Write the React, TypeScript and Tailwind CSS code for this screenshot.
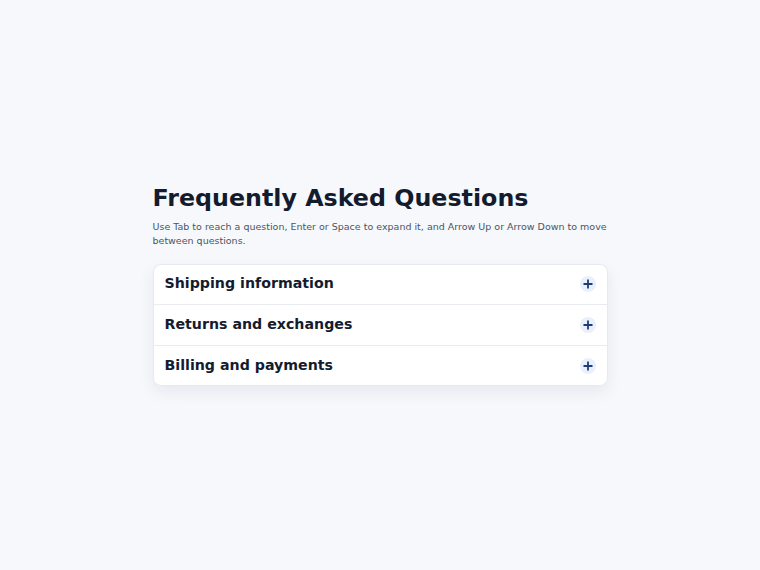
import React, { useState } from "react";

const QUESTIONS = [
  { id: "shipping", title: "Shipping information", answer: "Orders ship within 2 business days." },
  { id: "returns", title: "Returns and exchanges", answer: "Items can be returned within 30 days." },
  { id: "billing", title: "Billing and payments", answer: "We accept all major cards." },
];

const PlusIcon = ({ open }: { open: boolean }) => (
  <span className="flex h-4 w-4 items-center justify-center rounded-full bg-[#eaf0fb]">
    <svg width="10" height="10" viewBox="0 0 10 10" fill="none">
      <path d="M5 0.5v9" stroke="#1f3a7a" strokeWidth="1.8" className={open ? "hidden" : ""} />
      <path d="M0.5 5h9" stroke="#1f3a7a" strokeWidth="1.8" />
    </svg>
  </span>
);

export default function App() {
  const [openId, setOpenId] = useState<string | null>(null);

  return (
    <div
      className="flex min-h-[570px] items-center justify-center bg-[#f6f8fc] text-[#111827]"
      style={{ fontFamily: '"DejaVu Sans", sans-serif' }}
    >
      <div className="w-[455px]">
        <h1 className="text-[23.75px] font-bold leading-[28px] text-[#131c2e]">Frequently Asked Questions</h1>
        <p className="mt-[8px] text-[9.5px] leading-[14px] text-[#4b5563]">
          Use Tab to reach a question, Enter or Space to expand it, and Arrow Up or Arrow Down to move between
          questions.
        </p>
        <div className="mt-[16px] overflow-hidden rounded-lg bg-white shadow-[inset_0_0_0_1px_rgba(226,232,240,0.9),0_6px_16px_rgba(15,23,42,0.07)]">
          {QUESTIONS.map((q, i) => {
            const open = openId === q.id;
            return (
              <div key={q.id} className={i > 0 ? "border-t border-[#e8ebf0]" : ""}>
                <button
                  type="button"
                  aria-expanded={open}
                  onClick={() => setOpenId(open ? null : q.id)}
                  className="flex h-[40px] w-full items-center justify-between pl-3 pr-[12px] text-left"
                >
                  <span className="text-[14.2px] font-bold text-[#131c2e]">{q.title}</span>
                  <PlusIcon open={open} />
                </button>
                {open && <div className="px-3 pb-3 text-[12px] text-[#4b5563]">{q.answer}</div>}
              </div>
            );
          })}
        </div>
      </div>
    </div>
  );
}
